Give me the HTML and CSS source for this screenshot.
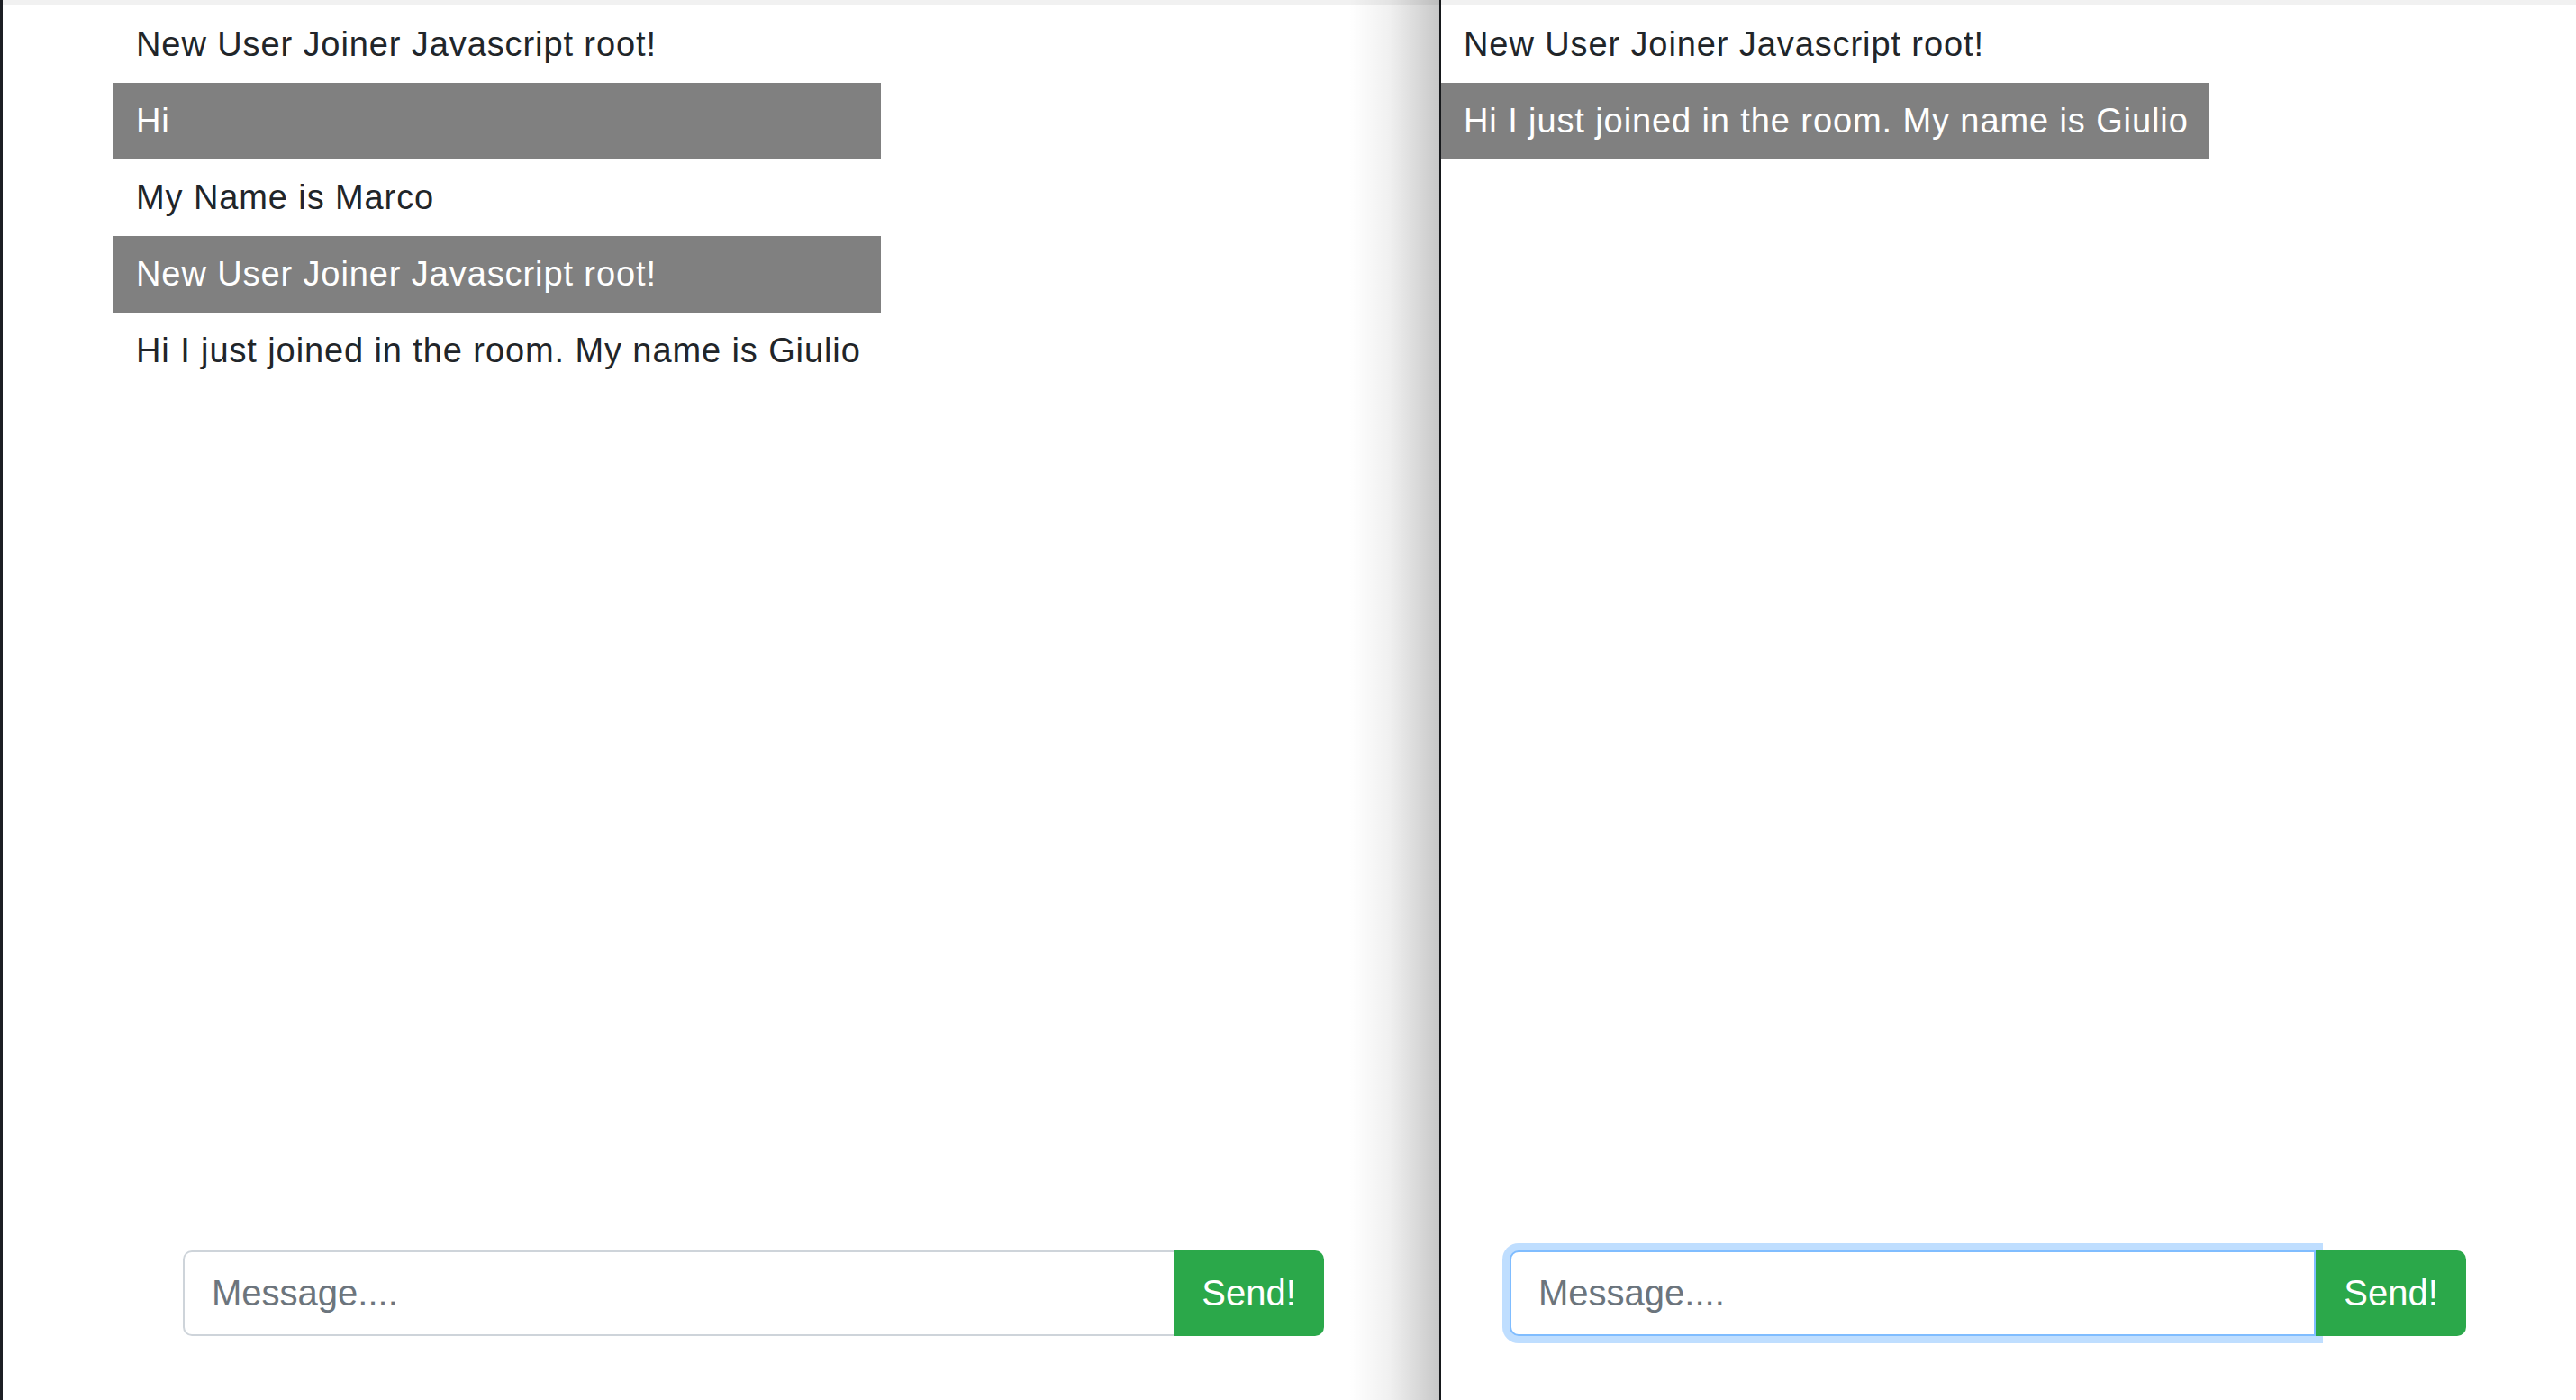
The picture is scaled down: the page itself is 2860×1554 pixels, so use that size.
FILE: index.html
```html
<!DOCTYPE html>
<html lang="en">
<head>
<meta charset="utf-8">
<title>Chat</title>
<link rel="stylesheet" href="styles.css">
</head>
<body>
  <div class="window window-left">
    <div class="topbar"></div>
    <ul class="messages messages-left">
      <li class="msg">New User Joiner Javascript root!</li>
      <li class="msg msg-alt">Hi</li>
      <li class="msg">My Name is Marco</li>
      <li class="msg msg-alt">New User Joiner Javascript root!</li>
      <li class="msg">Hi I just joined in the room. My name is Giulio</li>
    </ul>
    <form class="input-group group-left">
      <input class="form-control" type="text" placeholder="Message....">
      <button class="btn-send" type="button">Send!</button>
    </form>
  </div>
  <div class="window window-right">
    <div class="topbar"></div>
    <ul class="messages messages-right">
      <li class="msg">New User Joiner Javascript root!</li>
      <li class="msg msg-alt">Hi I just joined in the room. My name is Giulio</li>
    </ul>
    <form class="input-group group-right">
      <input class="form-control form-control-focus" type="text" placeholder="Message....">
      <button class="btn-send" type="button">Send!</button>
    </form>
  </div>
</body>
</html>
```

FILE: styles.css
```css
html, body {
  margin: 0;
  padding: 0;
  height: 100%;
}

body {
  display: flex;
  height: 1554px;
  overflow: hidden;
  font-family: "Liberation Sans", Arial, Helvetica, sans-serif;
  color: #212529;
  background: #fff;
}

.window {
  position: relative;
  display: flex;
  flex-direction: column;
  box-sizing: border-box;
  height: 100%;
  background: #fff;
}

.window-left {
  width: 1598px;
  border-left: 3px solid #1c1f24;
}

.window-left::after {
  content: "";
  position: absolute;
  top: 0;
  right: 0;
  bottom: 0;
  width: 100px;
  background: linear-gradient(to right, rgba(0, 0, 0, 0) 0%, rgba(0, 0, 0, 0.06) 45%, rgba(0, 0, 0, 0.22) 100%);
  pointer-events: none;
}

.window-right {
  flex: 1;
  border-left: 2px solid #16181b;
}

.topbar {
  height: 5px;
  background: #f1f1f1;
  border-bottom: 1px solid #d3d3d3;
  flex: none;
}

.messages {
  list-style: none;
  margin: 1px 0 0 0;
  padding: 0;
  width: 852px;
  flex: 1;
}

.messages-left {
  margin-left: 123px;
}

.messages-right {
  margin-left: 0;
}

.msg {
  height: 85px;
  line-height: 85px;
  padding: 0 25px;
  font-size: 38px;
  letter-spacing: 0.9px;
  white-space: nowrap;
  color: #212529;
}

.msg-alt {
  background: #808080;
  color: #fff;
}

.input-group {
  display: flex;
  height: 95px;
  margin: 0 0 71px 0;
}

.group-left {
  margin-left: 200px;
  width: 1267px;
}

.group-right {
  margin-left: 76px;
  width: 1062px;
}

.form-control {
  flex: 1;
  min-width: 0;
  box-sizing: border-box;
  height: 95px;
  margin: 0;
  padding: 0 30px;
  border: 2px solid #ced4da;
  border-right: none;
  border-radius: 10px 0 0 10px;
  font-family: "Liberation Sans", Arial, Helvetica, sans-serif;
  font-size: 40px;
  color: #495057;
  background: #fff;
  outline: none;
}

.form-control::placeholder {
  color: #6c757d;
  opacity: 1;
}

.form-control-focus {
  border: 2px solid #80bdff;
  box-shadow: 0 0 0 8px rgba(0, 123, 255, 0.25);
}

.btn-send {
  flex: none;
  width: 167px;
  height: 95px;
  margin: 0;
  padding: 0;
  border: none;
  border-radius: 0 10px 10px 0;
  background: #2ba84a;
  color: #fff;
  font-family: "Liberation Sans", Arial, Helvetica, sans-serif;
  font-size: 40px;
  position: relative;
  z-index: 1;
}
```
